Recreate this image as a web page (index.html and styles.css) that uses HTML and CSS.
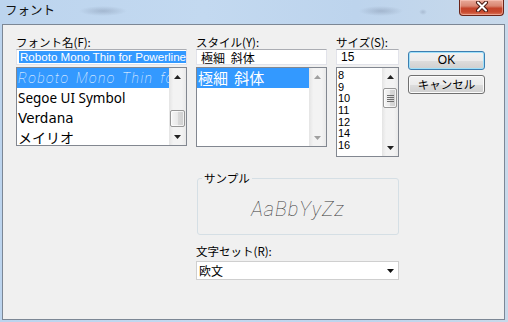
FILE: index.html
```html
<!DOCTYPE html>
<html lang="ja">

<head>
    <meta charset="UTF-8">
    <meta name="viewport" content="width=device-width, initial-scale=1.0">
    <title>フォント</title>
    <link rel="stylesheet" href="styles.css">
</head>

<body>
    <div class="window">
        <div class="titlebar">
            <span class="title">フォント</span>
            <div class="close-btn">
                <svg width="14" height="11" viewBox="0 0 14 11">
                    <path d="M3 1.5 L11 9.5 M11 1.5 L3 9.5" stroke="#4a1a12" stroke-width="4" stroke-linecap="round" />
                    <path d="M3 1.5 L11 9.5 M11 1.5 L3 9.5" stroke="#ffffff" stroke-width="2" stroke-linecap="round" />
                </svg>
            </div>
        </div>

        <div class="client">
            <!-- font name -->
            <div class="field">
                <div class="label">フォント名(F):</div>
                <div class="edit"><span class="edit-sel">Roboto Mono Thin for Powerline</span></div>
                <div class="listbox font-list">
                    <div class="items">
                        <div class="item selected mono">Roboto Mono Thin for Powerline</div>
                        <div class="item segoe">Segoe UI Symbol</div>
                        <div class="item verdana">Verdana</div>
                        <div class="item meiryo">メイリオ</div>
                    </div>
                    <div class="scrollbar">
                        <div class="sb-btn">
                            <svg width="7" height="4" viewBox="0 0 7 4"><polygon points="0,4 3.5,0 7,4" fill="#222" /></svg>
                        </div>
                        <div class="sb-track end">
                            <div class="sb-thumb"></div>
                        </div>
                        <div class="sb-btn">
                            <svg width="7" height="4" viewBox="0 0 7 4"><polygon points="0,0 7,0 3.5,4" fill="#222" /></svg>
                        </div>
                    </div>
                </div>
            </div>

            <!-- style -->
            <div class="field">
                <div class="label">スタイル(Y):</div>
                <div class="edit"><span class="edit-text jp">極細 斜体</span></div>
                <div class="listbox style-list">
                    <div class="items">
                        <div class="item selected style-item">極細 斜体</div>
                    </div>
                    <div class="scrollbar">
                        <div class="sb-btn">
                            <svg width="7" height="4" viewBox="0 0 7 4"><polygon points="0,4 3.5,0 7,4" fill="#a0a0a0" /></svg>
                        </div>
                        <div class="sb-track"></div>
                        <div class="sb-btn">
                            <svg width="7" height="4" viewBox="0 0 7 4"><polygon points="0,0 7,0 3.5,4" fill="#a0a0a0" /></svg>
                        </div>
                    </div>
                </div>
            </div>

            <!-- size -->
            <div class="field">
                <div class="label">サイズ(S):</div>
                <div class="edit"><span class="edit-text">15</span></div>
                <div class="listbox size-list">
                    <div class="items size-items">
                        <div class="item size-item">8</div>
                        <div class="item size-item">9</div>
                        <div class="item size-item">10</div>
                        <div class="item size-item">11</div>
                        <div class="item size-item">12</div>
                        <div class="item size-item">14</div>
                        <div class="item size-item">16</div>
                    </div>
                    <div class="scrollbar narrow">
                        <div class="sb-btn">
                            <svg width="7" height="4" viewBox="0 0 7 4"><polygon points="0,4 3.5,0 7,4" fill="#222" /></svg>
                        </div>
                        <div class="sb-track">
                            <div class="sb-thumb grip">
                                <span></span><span></span><span></span><span></span>
                            </div>
                        </div>
                        <div class="sb-btn">
                            <svg width="7" height="4" viewBox="0 0 7 4"><polygon points="0,0 7,0 3.5,4" fill="#222" /></svg>
                        </div>
                    </div>
                </div>
            </div>

            <!-- buttons -->
            <div class="buttons">
                <div class="btn default">OK</div>
                <div class="btn">キャンセル</div>
            </div>

            <!-- sample and charset -->
            <div class="lower">
                <fieldset class="sample">
                    <legend>サンプル</legend>
                    <div class="sample-text">AaBbYyZz</div>
                </fieldset>
                <div class="label charset-label">文字セット(R):</div>
                <div class="combo">
                    <span>欧文</span>
                    <svg width="7" height="4" viewBox="0 0 7 4"><polygon points="0,0 7,0 3.5,4" fill="#111" /></svg>
                </div>
            </div>
        </div>
    </div>
</body>

</html>
```

FILE: styles.css
```css
* {
    box-sizing: border-box;
}

body {
    margin: 0;
    width: 508px;
    height: 322px;
    overflow: hidden;
    font-family: "Noto Sans CJK JP", sans-serif;
    font-size: 12px;
    color: #000;
}

.window {
    height: 322px;
    display: flex;
    flex-direction: column;
    padding: 0 3px 2px 2px;
    background:
        radial-gradient(ellipse 24px 5px at 103px 11px, rgba(110, 125, 150, 0.35), transparent),
        radial-gradient(ellipse 22px 5px at 381px 11px, rgba(110, 125, 150, 0.35), transparent),
        radial-gradient(ellipse 4px 3px at 423px 12px, rgba(110, 125, 150, 0.3), transparent),
        linear-gradient(to right, #bcd4ee, #c3d9f0 40%, #bdd4ed 70%, #c8d9ea);
}

.titlebar {
    height: 24px;
    flex: none;
    display: flex;
    justify-content: space-between;
    align-items: flex-start;
}

.title {
    margin: 3px 0 0 3px;
    font-size: 12.5px;
    line-height: 14px;
    color: #111;
}

.close-btn {
    width: 45px;
    height: 16px;
    margin-right: 1px;
    display: flex;
    align-items: center;
    justify-content: center;
    padding-bottom: 2px;
    border: 1px solid #6b2418;
    border-top: none;
    border-radius: 0 0 4px 4px;
    background: linear-gradient(#e9aa9a 0%, #d98672 40%, #c4442b 55%, #c84a2f 80%, #dd7a5e 100%);
    box-shadow: inset 0 0 0 1px rgba(255, 210, 200, 0.5);
}

/* client area */
.client {
    flex: 1;
    border: 1px solid #7c8795;
    background: #f0f0f0;
    display: grid;
    grid-template-columns: 171px 131px 63px 77px;
    column-gap: 9px;
    align-content: start;
    align-items: start;
    padding: 11px 0 0 13px;
}

.label {
    height: 13px;
    line-height: 13px;
    font-size: 11.5px;
    white-space: nowrap;
}

.edit {
    height: 16px;
    background: #fff;
    border: 1px solid #e2e3ea;
    border-top-color: #abadb3;
    display: flex;
    align-items: center;
    padding-left: 2px;
    overflow: hidden;
}

.edit-sel {
    background: #3399ff;
    color: #fff;
    font-family: "Liberation Sans", sans-serif;
    font-size: 11.6px;
    line-height: 12px;
    padding: 0 1px;
    white-space: nowrap;
}

.edit-text {
    font-family: "Liberation Sans", sans-serif;
    font-size: 12px;
    line-height: 13px;
    padding-left: 2px;
}

.edit-text.jp {
    font-family: "Noto Sans CJK JP", sans-serif;
    word-spacing: 3px;
}

/* list boxes */
.listbox {
    margin-top: 2px;
    background: #fff;
    border: 1px solid #828790;
    display: flex;
    overflow: hidden;
}

.font-list {
    height: 79px;
}

.style-list {
    height: 80px;
}

.size-list {
    height: 90px;
}

.items {
    flex: 1;
    min-width: 0;
    overflow: hidden;
}

.size-items {
    padding-top: 2px;
}

.item {
    white-space: nowrap;
    overflow: hidden;
    padding-left: 1px;
}

.item.selected {
    background: #3399ff;
    color: #fff;
}

.mono {
    height: 20px;
    line-height: 20px;
    font-family: "Roboto", sans-serif;
    font-weight: 100;
    font-style: italic;
    font-size: 14px;
    letter-spacing: 1.4px;
    word-spacing: 2px;
}

.segoe {
    height: 20px;
    line-height: 20px;
    font-family: "Noto Sans", sans-serif;
    font-size: 13.5px;
}

.verdana {
    height: 20px;
    line-height: 20px;
    font-family: "DejaVu Sans", sans-serif;
    font-size: 13.5px;
}

.meiryo {
    height: 20px;
    line-height: 18px;
    font-size: 14px;
}

.style-item {
    height: 20px;
    line-height: 20px;
    font-size: 15px;
    word-spacing: 3px;
}

.size-item {
    height: 11.7px;
    line-height: 11.7px;
    font-family: "Liberation Sans", sans-serif;
    font-size: 11px;
}

/* scroll bars */
.scrollbar {
    width: 17px;
    flex: none;
    display: flex;
    flex-direction: column;
    background: linear-gradient(to right, #e4e4e4, #f3f3f3 25%, #f3f3f3 75%, #e9e9e9);
}

.scrollbar.narrow {
    width: 16px;
}

.sb-btn {
    height: 17px;
    flex: none;
    display: flex;
    align-items: center;
    justify-content: center;
}

.sb-track {
    flex: 1;
    display: flex;
    flex-direction: column;
    padding: 0 1px;
}

.sb-track.end {
    justify-content: flex-end;
    padding-bottom: 1px;
}

.sb-thumb {
    height: 17px;
    border: 1px solid #979797;
    border-radius: 2px;
    background: linear-gradient(to right, #f6f6f6, #e9e9e9 50%, #d9d9d9 51%, #d0d0d0);
    box-shadow: inset 0 0 0 1px rgba(255, 255, 255, 0.7);
}

.sb-thumb.grip {
    height: 20px;
    margin-top: 3px;
    display: flex;
    flex-direction: column;
    align-items: center;
    justify-content: center;
    gap: 1px;
}

.sb-thumb.grip span {
    width: 7px;
    height: 1px;
    background: #6e6e6e;
}

/* buttons */
.buttons {
    display: flex;
    flex-direction: column;
    gap: 5px;
    padding-top: 15px;
}

.btn {
    height: 19px;
    border: 1px solid #707070;
    border-radius: 3px;
    background: linear-gradient(#f2f2f2 0%, #ebebeb 50%, #dddddd 51%, #cfcfcf 100%);
    box-shadow: inset 0 0 0 1px #fbfbfb;
    display: flex;
    align-items: center;
    justify-content: center;
    font-size: 11.5px;
    line-height: 13px;
}

.btn.default {
    border-color: #3c7fb1;
    box-shadow: inset 0 0 0 1px #9fe0fa;
    font-family: "Liberation Sans", sans-serif;
    font-size: 12px;
}

/* sample + charset */
.lower {
    grid-column: 2 / 4;
    display: flex;
    flex-direction: column;
}

.sample {
    margin: 14px 0 0 1px;
    padding: 0;
    height: 64px;
    border: 1px solid #d5dfe5;
    border-radius: 3px;
    min-width: 0;
}

.sample legend {
    margin-left: 4px;
    padding: 0 2px;
    font-size: 11.5px;
    line-height: 14px;
}

.sample-text {
    padding-top: 12px;
    text-align: center;
    font-family: "Roboto", sans-serif;
    font-weight: 100;
    font-style: italic;
    font-size: 20px;
    line-height: 24px;
    letter-spacing: 1px;
    color: #3a3a3a;
}

.charset-label {
    margin-top: 10px;
}

.combo {
    margin-top: 3px;
    height: 19px;
    background: #fff;
    border: 1px solid #cfcfcf;
    display: flex;
    align-items: center;
    justify-content: space-between;
    padding: 0 4px 0 2px;
    font-size: 12px;
}
```
